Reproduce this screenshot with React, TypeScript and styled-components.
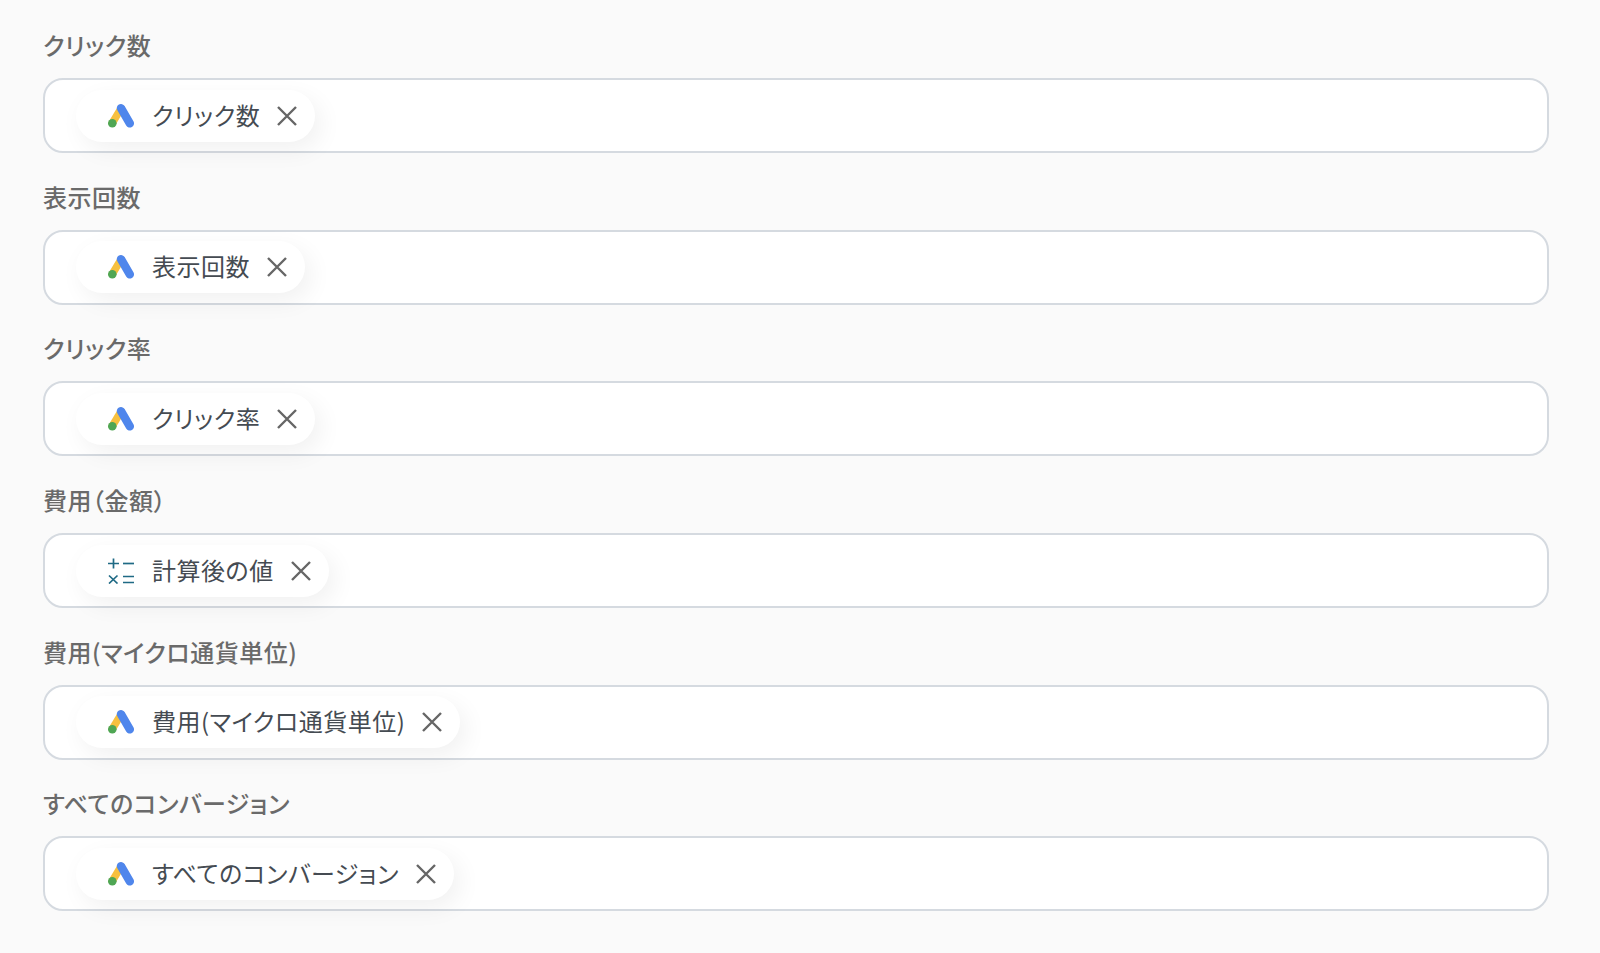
import styled, { createGlobalStyle } from "styled-components";

const GlobalStyle = createGlobalStyle`
  html, body {
    margin: 0;
    padding: 0;
    background: #fafafa;
  }
  body {
    font-family: "Noto Sans CJK JP", "Noto Sans", sans-serif;
    font-feature-settings: "palt";
    letter-spacing: 0.5px;
  }
`;

type FieldData = {
  label: string;
  value: string;
  icon: "ads" | "calc";
};

const fields: FieldData[] = [
  { label: "クリック数", value: "クリック数", icon: "ads" },
  { label: "表示回数", value: "表示回数", icon: "ads" },
  { label: "クリック率", value: "クリック率", icon: "ads" },
  { label: "費用（金額）", value: "計算後の値", icon: "calc" },
  { label: "費用(マイクロ通貨単位)", value: "費用(マイクロ通貨単位)", icon: "ads" },
  { label: "すべてのコンバージョン", value: "すべてのコンバージョン", icon: "ads" },
];

const AdsIcon = () => (
  <svg width="28" height="26" viewBox="0 0 28 26" fill="none">
    <path d="M15 5.5 L6.3 20" stroke="#f6c03f" strokeWidth="7.4" strokeLinecap="round" />
    <path d="M15 5.2 L23.8 20.4" stroke="#4f86ec" strokeWidth="8.4" strokeLinecap="round" />
    <circle cx="6.3" cy="20.2" r="4.3" fill="#4fa654" />
  </svg>
);

const CalcIcon = () => (
  <svg width="28" height="26" viewBox="0 0 28 26" fill="none" stroke="#1f6a85" strokeWidth="1.7">
    <path d="M2 5.5 H13 M7.5 0.5 V10.5" />
    <path d="M17 5.5 H28" />
    <path d="M3 17.5 L11.5 25.5 M11.5 17.5 L3 25.5" />
    <path d="M17 18.5 H28 M17 24.5 H28" />
  </svg>
);

const CloseIcon = () => (
  <svg width="22" height="22" viewBox="0 0 22 22" fill="none" stroke="#666" strokeWidth="2.4">
    <path d="M2 2 L20 20 M20 2 L2 20" />
  </svg>
);

export default function App() {
  return (
    <>
      <GlobalStyle />
      <Page>
        {fields.map((f) => (
          <Field key={f.label}>
            <Label>{f.label}</Label>
            <InputBox>
              <Chip>
                <IconSlot>{f.icon === "ads" ? <AdsIcon /> : <CalcIcon />}</IconSlot>
                <ChipText>{f.value}</ChipText>
                <CloseIcon />
              </Chip>
            </InputBox>
          </Field>
        ))}
      </Page>
    </>
  );
}

const Page = styled.div`
  display: flex;
  flex-direction: column;
  gap: 25.7px;
  min-height: 953px;
  box-sizing: border-box;
  padding: 27px 51px 0 43px;
  background: #fafafa;
`;

const Field = styled.div`
  display: flex;
  flex-direction: column;
  gap: 15px;
`;

const Label = styled.div`
  font-size: 24px;
  line-height: 36px;
  height: 36px;
  font-weight: 500;
  color: #6a6a6a;
`;

const InputBox = styled.div`
  display: flex;
  align-items: center;
  box-sizing: border-box;
  height: 75px;
  padding-left: 31px;
  background: #fff;
  border: 2px solid #d5dae0;
  border-radius: 20px;
`;

const Chip = styled.div`
  display: flex;
  align-items: center;
  height: 52px;
  padding: 0 17px 0 30px;
  background: #fff;
  border-radius: 26px;
  box-shadow: 6px 8px 24px rgba(0, 0, 0, 0.06);
`;

const IconSlot = styled.div`
  display: flex;
  width: 28px;
  height: 26px;
  margin-right: 18px;
`;

const ChipText = styled.span`
  font-size: 24px;
  line-height: 36px;
  color: #454b52;
  margin: 0 16px 2px 0;
  white-space: nowrap;
`;
